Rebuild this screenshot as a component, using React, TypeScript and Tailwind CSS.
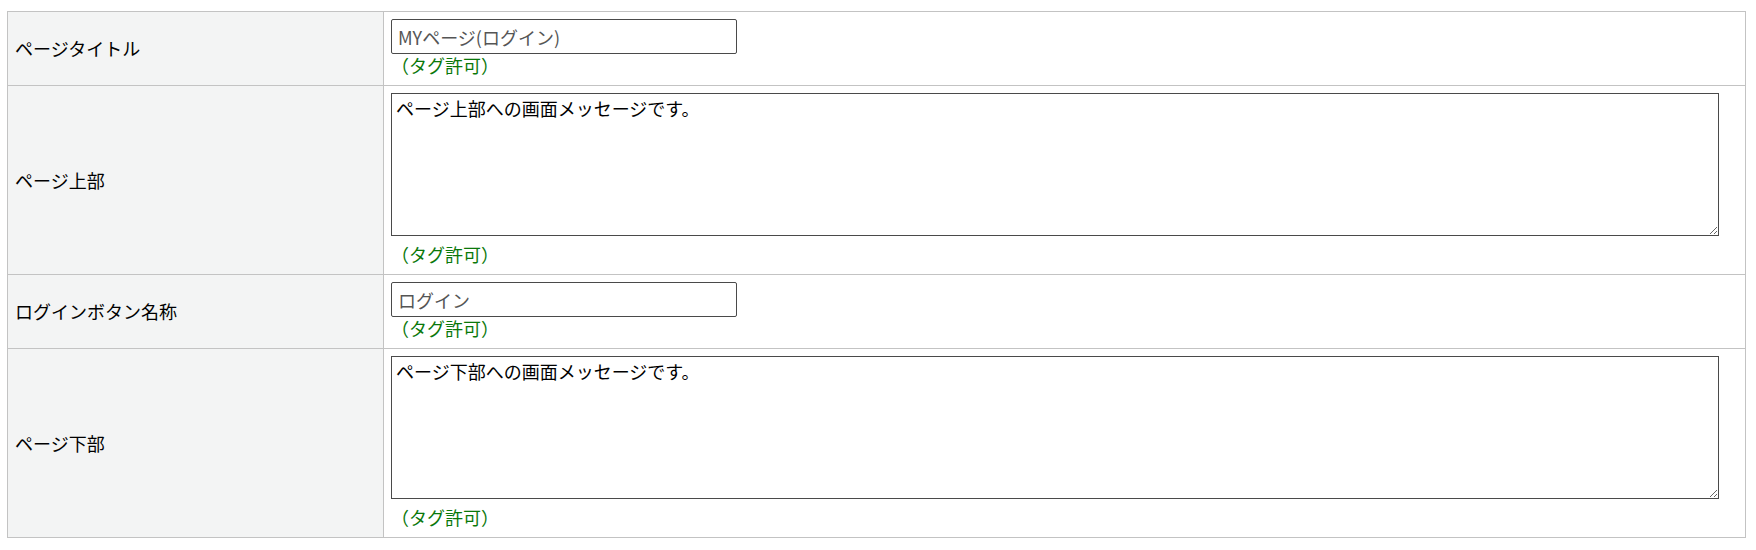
const font = { fontFamily: '"Noto Sans CJK JP", "Noto Sans", sans-serif' };

type Row = {
  label: string;
  kind: 'input' | 'textarea';
  value: string;
};

const rows: Row[] = [
  { label: 'ページタイトル', kind: 'input', value: 'MYページ(ログイン)' },
  { label: 'ページ上部', kind: 'textarea', value: 'ページ上部への画面メッセージです。' },
  { label: 'ログインボタン名称', kind: 'input', value: 'ログイン' },
  { label: 'ページ下部', kind: 'textarea', value: 'ページ下部への画面メッセージです。' },
];

function TagNote() {
  return <div className="h-[23px] leading-[23px] text-[#0a780a]">（タグ許可）</div>;
}

export default function App() {
  return (
    <div className="bg-white w-[1756px] h-[550px] pt-[11px] pl-[7px] text-[18px] text-black" style={font}>
      <table className="border-collapse w-[1739px]">
        <tbody>
          {rows.map((r) => (
            <tr key={r.label}>
              <td className="w-[376px] border border-[#c3c3c3] bg-[#f3f4f4] px-[7px] align-middle">{r.label}</td>
              <td className="border border-[#c3c3c3] bg-white px-[7px] pt-[7px] pb-[8px] align-top">
                {r.kind === 'input' ? (
                  <input
                    type="text"
                    defaultValue={r.value}
                    className="block w-[346px] h-[35px] border border-[#4a4a4a] rounded-[2px] px-[6px] text-[#555] outline-none"
                    style={font}
                  />
                ) : (
                  <textarea
                    defaultValue={r.value}
                    className="block w-[1328px] h-[143px] mb-[7px] border border-[#4a4a4a] px-[4px] py-[2px] leading-[24px] text-black outline-none"
                    style={font}
                  />
                )}
                <TagNote />
              </td>
            </tr>
          ))}
        </tbody>
      </table>
    </div>
  );
}
